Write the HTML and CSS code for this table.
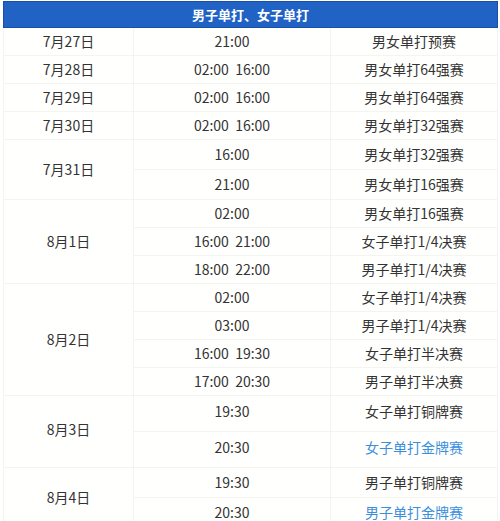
FILE: index.html
```html
<!DOCTYPE html>
<html lang="zh">
<head>
<meta charset="utf-8">
<link rel="stylesheet" href="styles.css">
</head>
<body>
<table class="sched">
  <colgroup><col class="c1"><col class="c2"><col class="c3"></colgroup>
  <thead>
    <tr class="h-head"><th colspan="3">男子单打、女子单打</th></tr>
  </thead>
  <tbody>
    <tr class="h28"><td>7月27日</td><td>21:00</td><td>男女单打预赛</td></tr>
    <tr class="h28"><td>7月28日</td><td>02:00&nbsp;&nbsp;16:00</td><td>男女单打64强赛</td></tr>
    <tr class="h28"><td>7月29日</td><td>02:00&nbsp;&nbsp;16:00</td><td>男女单打64强赛</td></tr>
    <tr class="h28"><td>7月30日</td><td>02:00&nbsp;&nbsp;16:00</td><td>男女单打32强赛</td></tr>
    <tr class="h30"><td rowspan="2">7月31日</td><td>16:00</td><td>男女单打32强赛</td></tr>
    <tr class="h30"><td>21:00</td><td>男女单打16强赛</td></tr>
    <tr class="h28"><td rowspan="3">8月1日</td><td>02:00</td><td>男女单打16强赛</td></tr>
    <tr class="h28"><td>16:00&nbsp;&nbsp;21:00</td><td>女子单打1/4决赛</td></tr>
    <tr class="h28"><td>18:00&nbsp;&nbsp;22:00</td><td>男子单打1/4决赛</td></tr>
    <tr class="h28"><td rowspan="4">8月2日</td><td>02:00</td><td>女子单打1/4决赛</td></tr>
    <tr class="h28"><td>03:00</td><td>男子单打1/4决赛</td></tr>
    <tr class="h28"><td>16:00&nbsp;&nbsp;19:30</td><td>女子单打半决赛</td></tr>
    <tr class="h28"><td>17:00&nbsp;&nbsp;20:30</td><td>男子单打半决赛</td></tr>
    <tr class="h36"><td rowspan="2" class="lift">8月3日</td><td class="lift">19:30</td><td class="lift">女子单打铜牌赛</td></tr>
    <tr class="h36"><td class="lift">20:30</td><td class="gold lift">女子单打金牌赛</td></tr>
    <tr class="h30"><td rowspan="2">8月4日</td><td>19:30</td><td>男子单打铜牌赛</td></tr>
    <tr class="h30"><td>20:30</td><td class="gold">男子单打金牌赛</td></tr>
  </tbody>
</table>
</body>
</html>
```
FILE: styles.css
```css
html, body {
  margin: 0;
  padding: 0;
  background: #ffffff;
}
body {
  padding: 1px 3px 0 3px;
  font-family: "Noto Sans CJK SC", "Noto Sans", sans-serif;
  color: #333333;
}
.sched {
  width: 494px;
  border-collapse: collapse;
  table-layout: fixed;
  font-size: 14px;
}
.c1 { width: 130px; }
.c2 { width: 197px; }
.c3 { width: 167px; }
.sched th {
  background: #2162c5;
  color: #ffffff;
  font-weight: bold;
  font-size: 13px;
  border: 1px solid #1b4fa6;
  padding: 0;
  line-height: 24px;
}
.h-head { height: 26px; }
.sched td {
  text-align: center;
  border: 1px solid #f4f4f0;
  padding: 0 0 1px 0;
  line-height: 20px;
  background: #fffffe;
}
.sched td.lift { padding-bottom: 6px; }
.h28 { height: 28px; }
.h30 { height: 30px; }
.h36 { height: 36px; }
.sched td.gold { color: #3a8fdd; }
```
